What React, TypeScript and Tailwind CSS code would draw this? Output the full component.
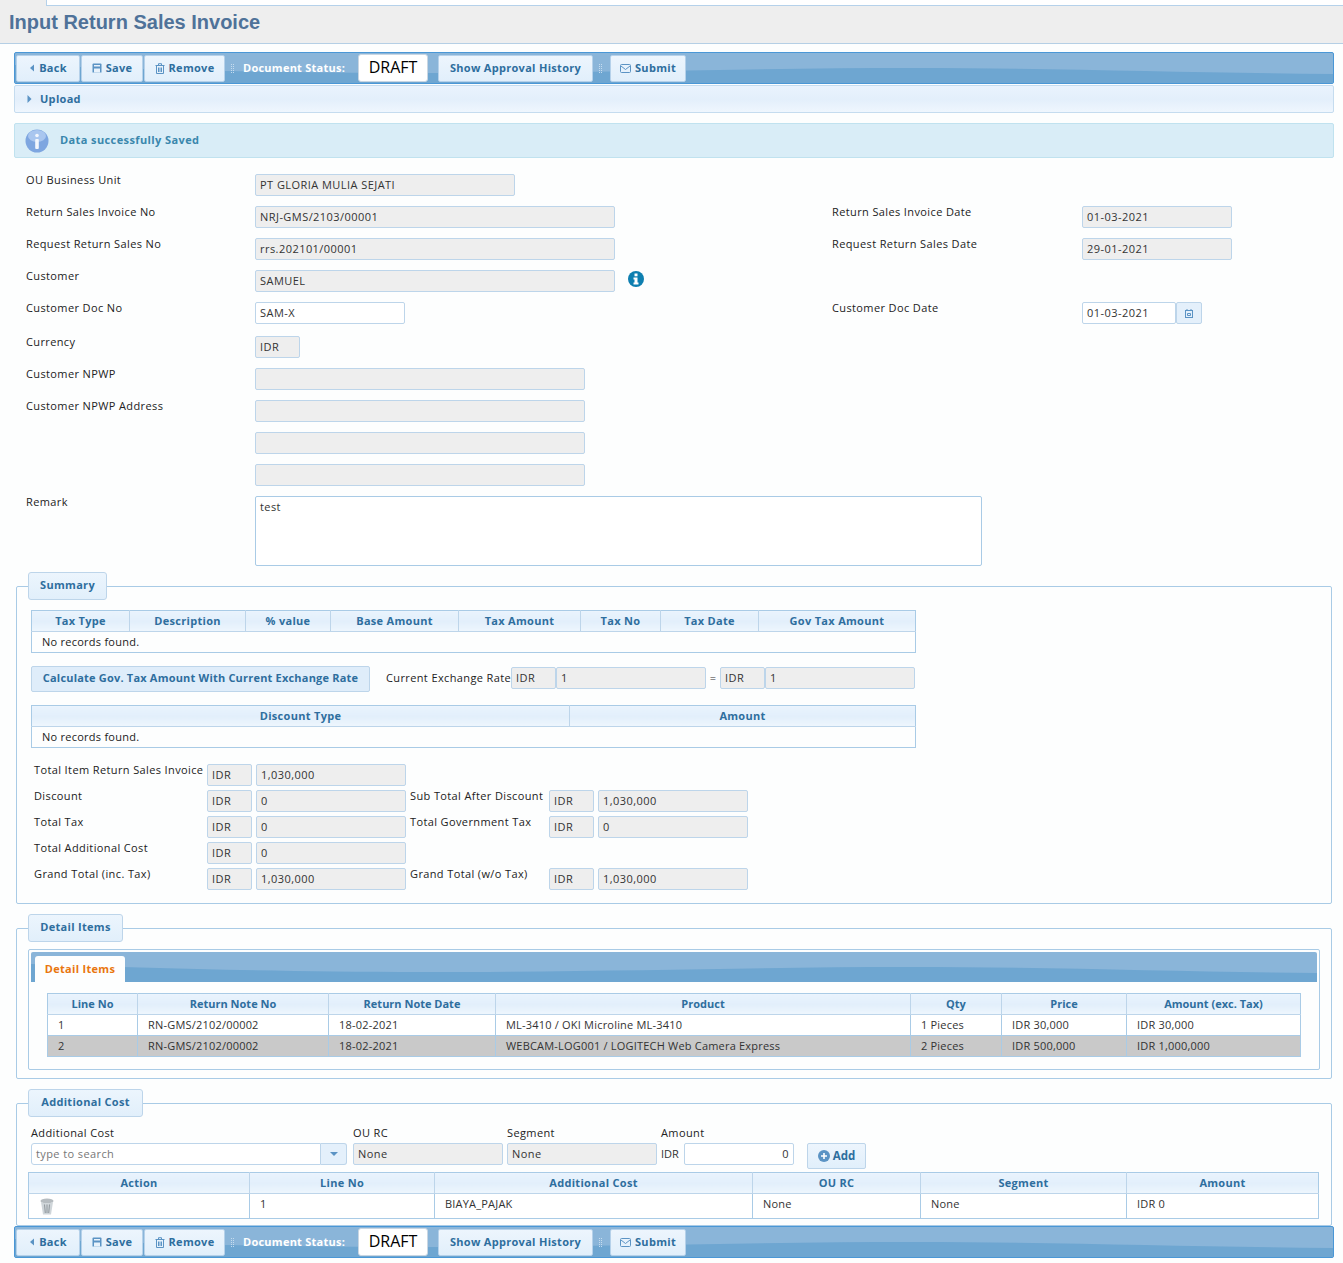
import React from "react";

const Wave = () => (
  <svg className="absolute inset-0 h-full w-full" viewBox="0 0 1320 30" preserveAspectRatio="none">
    <path d="M0 12 C120 16 250 20 400 20 C600 20 750 15 900 15 C1050 15 1180 20 1320 21 L1320 30 L0 30 Z" fill="#6ea6d1" />
  </svg>
);

const TriLeft = () => (
  <svg width="6" height="8" viewBox="0 0 6 8"><path d="M5 0.5V7.5L1 4Z" fill="#5b93c4" /></svg>
);

const SaveIcon = () => (
  <svg width="10" height="10" viewBox="0 0 10 10">
    <path d="M0.5 1.5Q0.5 0.5 1.5 0.5H8.5Q9.5 0.5 9.5 1.5V9.5H0.5Z" fill="#5b93c4" />
    <rect x="2" y="2" width="6" height="1.5" fill="#e8f2fb" />
    <rect x="2" y="5.5" width="6" height="4" fill="#e8f2fb" />
  </svg>
);

const TrashIcon = () => (
  <svg width="10" height="11" viewBox="0 0 10 11" fill="none" stroke="#5b93c4" strokeWidth="1">
    <path d="M0.5 2.5H9.5M3.5 2V0.7H6.5V2M1.5 3V10.5H8.5V3M3.5 4.5V9M5 4.5V9M6.5 4.5V9" />
  </svg>
);

const MailIcon = () => (
  <svg width="11" height="9" viewBox="0 0 11 9" fill="none" stroke="#5b93c4" strokeWidth="1">
    <rect x="0.5" y="0.5" width="10" height="8" rx="1" />
    <path d="M1 2L5.5 5.5L10 2" />
  </svg>
);

const Grip = () => (
  <span className="mx-[6px] grid grid-cols-2 gap-[1px]">
    {Array.from({ length: 10 }).map((_, i) => (
      <span key={i} className="h-[1px] w-[1px] bg-[#c5dcef]" />
    ))}
  </span>
);

const ToolButton = ({ icon, label, className }: { icon?: React.ReactNode; label: string; className: string }) => (
  <button className={`flex h-[27px] items-center justify-center gap-[4px] whitespace-nowrap rounded-[2px] border border-[#b5d1ea] bg-gradient-to-b from-[#edf5fd] to-[#e1effb] text-[11px] font-bold tracking-[0.3px] text-[#2e6e9e] ${className}`}>
    {icon}
    {label}
  </button>
);

const Toolbar = () => (
  <div className="relative ml-[14px] h-[32px] w-[1320px] rounded-[2px] border border-[#4a97d6] bg-[#8ab5d9]">
    <Wave />
    <div className="relative flex h-full items-center pl-[1px]">
      <ToolButton icon={<TriLeft />} label="Back" className="w-[64px]" />
      <ToolButton icon={<SaveIcon />} label="Save" className="ml-[1px] w-[62px]" />
      <ToolButton icon={<TrashIcon />} label="Remove" className="ml-[1px] w-[81px]" />
      <Grip />
      <span className="ml-[3px] w-[115px] whitespace-nowrap text-[11px] font-bold tracking-[0.25px] text-white">Document Status:</span>
      <span className="-mt-[1px] flex h-[28px] w-[70px] items-center justify-center rounded-[3px] border border-[#c9d6e2] bg-white pb-[1px] text-[16px] text-black">DRAFT</span>
      <ToolButton label="Show Approval History" className="ml-[10px] w-[155px]" />
      <Grip />
      <ToolButton icon={<MailIcon />} label="Submit" className="ml-[2px] w-[76px]" />
    </div>
  </div>
);

const inputBase = "flex h-[22px] items-center overflow-hidden whitespace-nowrap rounded-[2px] border border-[#bdd5ea] px-[4px] pb-[2px] text-[11px] leading-none tracking-[0.45px] text-[#333]";

const Box = ({ w, value = "", editable, right }: { w: string; value?: string; editable?: boolean; right?: boolean }) => (
  <div className={`${inputBase} ${w} ${editable ? "bg-white" : "bg-[#eeeeee]"} ${right ? "justify-end" : ""}`}>{value}</div>
);

const Label = ({ children, className = "" }: { children: React.ReactNode; className?: string }) => (
  <div className={`whitespace-nowrap text-[11px] leading-[11px] tracking-[0.38px] text-[#222] ${className}`}>{children}</div>
);

const FormRow = ({ label, children, className = "mb-[10px]" }: { label?: string; children: React.ReactNode; className?: string }) => (
  <div className={`flex h-[22px] ${className}`}>
    <Label className="w-[229px]">{label}</Label>
    {children}
  </div>
);

const Right = ({ label, children }: { label: string; children: React.ReactNode }) => (
  <>
    <Label className="ml-auto w-[250px]">{label}</Label>
    {children}
  </>
);

const Legend = ({ title, w }: { title: string; w: string }) => (
  <legend className={`ml-[11px] flex h-[28px] items-center justify-center rounded-[3px] border border-[#bdd5ea] bg-gradient-to-b from-[#ecf5fd] to-[#e1effb] pb-[2px] text-[11px] font-bold tracking-[0.3px] text-[#2e6e9e] ${w}`}>
    {title}
  </legend>
);

const GridTable = ({ cols, heads, className, children, tight }: { cols: number[]; heads: string[]; className: string; children: React.ReactNode; tight?: boolean }) => (
  <table className={`table-fixed border-collapse border border-[#a9cbe6] ${className}`}>
    <colgroup>
      {cols.map((c, i) => (
        <col key={i} style={{ width: c }} />
      ))}
    </colgroup>
    <thead>
      <tr>
        {heads.map((h) => (
          <th
            key={h}
            className={`h-[21px] border-r border-b border-[#bdd5ea] bg-gradient-to-b from-[#e9f3fd] via-[#e2effb] to-[#eef6fd] p-0 text-center text-[11px] font-bold text-[#2e6e9e] last:border-r-0 ${tight ? "tracking-normal" : "tracking-[0.3px]"}`}
          >
            {h}
          </th>
        ))}
      </tr>
    </thead>
    <tbody>{children}</tbody>
  </table>
);

const Cell = ({ children, tall }: { children?: React.ReactNode; tall?: boolean }) => (
  <td className={`${tall ? "h-[25px] pb-[3px]" : "h-[21px]"} border-r border-b border-[#a9cbe6] pl-[10px] text-[11px] tracking-[0.2px] text-[#333] last:border-r-0`}>
    {children}
  </td>
);

const NoRecords = ({ span }: { span: number }) => (
  <tr>
    <td colSpan={span} className="h-[21px] p-0 pl-[10px] text-[11px] tracking-[0.25px] text-[#222]">No records found.</td>
  </tr>
);

const Total = ({ label, value, label2, value2 }: { label: string; value: string; label2?: string; value2?: string }) => (
  <div className="mb-[4px] flex h-[22px]">
    <Label className="w-[173px]">{label}</Label>
    <Box w="w-[45px]" value="IDR" />
    <div className="ml-[4px]"><Box w="w-[150px]" value={value} /></div>
    {label2 && (
      <>
        <Label className="ml-[4px] w-[139px]">{label2}</Label>
        <Box w="w-[45px]" value="IDR" />
        <div className="ml-[4px]"><Box w="w-[150px]" value={value2} /></div>
      </>
    )}
  </div>
);

const detailRows = [
  ["1", "RN-GMS/2102/00002", "18-02-2021", "ML-3410 / OKI Microline ML-3410", "1 Pieces", "IDR 30,000", "IDR 30,000"],
  ["2", "RN-GMS/2102/00002", "18-02-2021", "WEBCAM-LOG001 / LOGITECH Web Camera Express", "2 Pieces", "IDR 500,000", "IDR 1,000,000"],
];

export default function App() {
  return (
    <div className="min-h-[1263px] bg-[#fdfefe] font-['Open_Sans',sans-serif]">
      <div className="h-[44px] border-b border-[#b5cfe5] bg-[#eeeeee]">
        <div className="ml-[46px] h-[6px] border-b border-l border-[#b5d1ea] bg-white" />
        <h1 className="pl-[9px] pt-[4px] font-['Liberation_Sans',sans-serif] text-[20px] leading-[24px] font-bold text-[#4f7299]">Input Return Sales Invoice</h1>
      </div>

      <div className="h-[8px]" />
      <Toolbar />

      <div className="ml-[14px] mt-[1px] flex h-[28px] w-[1320px] items-center gap-[8px] rounded-[2px] border border-[#c5dcef] bg-gradient-to-b from-[#eaf3fd] via-[#e3effb] to-[#eff6fe] pl-[12px] text-[11px] font-bold tracking-[0.3px] text-[#2e6e9e]">
        <svg width="5" height="8" viewBox="0 0 5 8"><path d="M0.5 0V8L4.5 4Z" fill="#5b93c4" /></svg>
        Upload
      </div>

      <div className="ml-[14px] mt-[10px] flex h-[35px] w-[1320px] items-center rounded-[2px] border border-[#c0e2ef] bg-[#d9edf7] pl-[10px] text-[11px] font-bold tracking-[0.4px] text-[#3a87ad]">
        <svg width="24" height="24" viewBox="0 0 24 24" className="mr-[11px]">
          <circle cx="12" cy="12" r="11.5" fill="#7ea6e0" />
          <ellipse cx="12" cy="7" rx="9" ry="6" fill="#a9c6ef" />
          <circle cx="12" cy="6.5" r="1.8" fill="#f2f6fd" />
          <rect x="10.2" y="10" width="3.6" height="10" rx="1" fill="#f2f6fd" />
        </svg>
        Data successfully Saved
      </div>

      <div className="mx-[26px] mt-[16px] w-[1206px]">
        <FormRow label="OU Business Unit"><Box w="w-[260px]" value="PT GLORIA MULIA SEJATI" /></FormRow>
        <FormRow label="Return Sales Invoice No">
          <Box w="w-[360px]" value="NRJ-GMS/2103/00001" />
          <Right label="Return Sales Invoice Date"><Box w="w-[150px]" value="01-03-2021" /></Right>
        </FormRow>
        <FormRow label="Request Return Sales No">
          <Box w="w-[360px]" value="rrs.202101/00001" />
          <Right label="Request Return Sales Date"><Box w="w-[150px]" value="29-01-2021" /></Right>
        </FormRow>
        <FormRow label="Customer">
          <Box w="w-[360px]" value="SAMUEL" />
          <svg width="16" height="16" viewBox="0 0 16 16" className="ml-[13px] mt-[1px]">
            <circle cx="8" cy="8" r="8" fill="#0e7fb0" />
            <rect x="6.5" y="2.5" width="3" height="2.8" fill="#fff" />
            <path d="M5.5 6.5H9.5V11.5H10.5V13.5H5.5V11.5H6.5V8.5H5.5Z" fill="#fff" />
          </svg>
        </FormRow>
        <FormRow label="Customer Doc No" className="mb-[12px]">
          <Box w="w-[150px]" value="SAM-X" editable />
          <div className="ml-[427px] w-[250px]"><Label>Customer Doc Date</Label></div>
          <Box w="w-[94px]" value="01-03-2021" editable />
          <div className="flex h-[22px] w-[26px] items-center justify-center rounded-[2px] border border-[#bdd5ea] bg-[#e4f0fb]">
            <svg width="8" height="9" viewBox="0 0 8 9" fill="none" stroke="#5b93c4">
              <rect x="0.5" y="1.5" width="7" height="7" />
              <path d="M2 0V2M6 0V2M2.5 4.5H5.5V6.5H2.5Z" />
            </svg>
          </div>
        </FormRow>
        <FormRow label="Currency"><Box w="w-[45px]" value="IDR" /></FormRow>
        <FormRow label="Customer NPWP"><Box w="w-[330px]" /></FormRow>
        <FormRow label="Customer NPWP Address"><Box w="w-[330px]" /></FormRow>
        <FormRow><Box w="w-[330px]" /></FormRow>
        <FormRow><Box w="w-[330px]" /></FormRow>
        <div className="flex h-[70px]">
          <Label className="w-[229px]">Remark</Label>
          <div className="h-[70px] w-[727px] rounded-[2px] border border-[#a9cbe6] bg-white px-[4px] pt-[3px] text-[11px] leading-[13px] tracking-[0.4px] text-[#333]">test</div>
        </div>
      </div>

      <fieldset className="ml-[16px] mt-[6px] h-[332px] w-[1316px] rounded-[2px] border border-[#a9cbe6]">
        <Legend title="Summary" w="w-[79px]" />
        <div className="px-[14px] pt-[10px]">
          <GridTable
            className="w-[884px]"
            cols={[98, 116, 85, 128, 122, 80, 98, 157]}
            heads={["Tax Type", "Description", "% value", "Base Amount", "Tax Amount", "Tax No", "Tax Date", "Gov Tax Amount"]}
          >
            <NoRecords span={8} />
          </GridTable>
          <div className="mt-[13px] flex h-[26px] items-start">
            <button className="flex h-[26px] w-[339px] items-center justify-center whitespace-nowrap rounded-[2px] border border-[#bdd5ea] bg-[#dfedfa] pb-[2px] text-[11px] font-bold tracking-[0.2px] text-[#2e6e9e]">
              Calculate Gov. Tax Amount With Current Exchange Rate
            </button>
            <div className="mt-[1px] flex items-center">
              <Label className="ml-[16px] w-[125px] pb-[2px]">Current Exchange Rate</Label>
              <Box w="w-[45px]" value="IDR" />
              <Box w="w-[150px]" value="1" />
              <span className="w-[14px] text-center text-[11px] text-[#333]">=</span>
              <Box w="w-[45px]" value="IDR" />
              <Box w="w-[150px]" value="1" />
            </div>
          </div>
          <GridTable className="mt-[13px] w-[884px]" cols={[538, 346]} heads={["Discount Type", "Amount"]}>
            <NoRecords span={2} />
          </GridTable>
          <div className="mt-[16px] pl-[3px]">
            <Total label="Total Item Return Sales Invoice" value="1,030,000" />
            <Total label="Discount" value="0" label2="Sub Total After Discount" value2="1,030,000" />
            <Total label="Total Tax" value="0" label2="Total Government Tax" value2="0" />
            <Total label="Total Additional Cost" value="0" />
            <Total label="Grand Total (inc. Tax)" value="1,030,000" label2="Grand Total (w/o Tax)" value2="1,030,000" />
          </div>
        </div>
      </fieldset>

      <fieldset className="ml-[16px] mt-[10px] h-[165px] w-[1316px] rounded-[2px] border border-[#a9cbe6]">
        <Legend title="Detail Items" w="w-[95px]" />
        <div className="mx-[11px] mt-[7px] h-[121px] w-[1292px] rounded-[2px] border border-[#a9cbe6] p-[2px]">
          <div className="relative h-[30px] rounded-t-[2px] bg-[#8ab5d9]">
            <Wave />
            <div className="absolute bottom-0 left-[4px] flex h-[26px] w-[90px] items-center justify-center rounded-t-[3px] bg-[#fdfefe] text-[11px] font-bold tracking-[0.3px] text-[#e9760f]">
              Detail Items
            </div>
          </div>
          <div className="px-[16px] pt-[11px]">
            <GridTable
              tight
              className="w-[1253px]"
              cols={[90, 191, 167, 415, 91, 125, 174]}
              heads={["Line No", "Return Note No", "Return Note Date", "Product", "Qty", "Price", "Amount (exc. Tax)"]}
            >
              {detailRows.map((r, i) => (
                <tr key={i} className={i === 1 ? "bg-[#c9c9c9]" : "bg-white"}>
                  {r.map((c) => (
                    <Cell key={c}>{c}</Cell>
                  ))}
                </tr>
              ))}
            </GridTable>
          </div>
        </div>
      </fieldset>

      <fieldset className="ml-[16px] mt-[10px] h-[137px] w-[1316px] rounded-[2px] border border-[#a9cbe6]">
        <Legend title="Additional Cost" w="w-[115px]" />
        <div className="pl-[14px] pt-[9px]">
          <div className="flex">
            <div className="w-[322px]">
              <Label className="mt-[1px] mb-[5px]">Additional Cost</Label>
              <div className="flex h-[22px] w-[316px]">
                <div className="flex w-[290px] items-center rounded-l-[3px] border border-[#bdd5ea] bg-white px-[4px] text-[11px] tracking-[0.4px] text-[#777]">type to search</div>
                <div className="flex w-[26px] items-center justify-center rounded-r-[3px] border border-l-0 border-[#bdd5ea] bg-[#e4f0fb]">
                  <svg width="8" height="4" viewBox="0 0 8 4"><path d="M0 0H8L4 4Z" fill="#5b93c4" /></svg>
                </div>
              </div>
            </div>
            <div className="w-[154px]">
              <Label className="mt-[1px] mb-[5px]">OU RC</Label>
              <Box w="w-[150px]" value="None" />
            </div>
            <div className="w-[154px]">
              <Label className="mt-[1px] mb-[5px]">Segment</Label>
              <Box w="w-[150px]" value="None" />
            </div>
            <div>
              <Label className="mt-[1px] mb-[5px]">Amount</Label>
              <div className="flex">
                <span className="w-[23px] text-[11px] leading-[22px] text-[#333]">IDR</span>
                <Box w="w-[110px]" value="0" editable right />
                <button className="ml-[13px] flex h-[26px] w-[59px] items-center justify-center gap-[3px] rounded-[2px] border border-[#bdd5ea] bg-gradient-to-b from-[#edf5fd] to-[#e1effb] text-[11.5px] font-bold text-[#2e6e9e]">
                  <svg width="12" height="12" viewBox="0 0 12 12">
                    <circle cx="6" cy="6" r="6" fill="#5b93c4" />
                    <path d="M6 3V9M3 6H9" stroke="#fff" strokeWidth="1.6" />
                  </svg>
                  Add
                </button>
              </div>
            </div>
          </div>
          <div className="-ml-[3px] mt-[3px]">
            <GridTable
              className="w-[1290px]"
              cols={[221, 185, 318, 168, 206, 192]}
              heads={["Action", "Line No", "Additional Cost", "OU RC", "Segment", "Amount"]}
            >
              <tr className="bg-white">
                <td className="h-[25px] border-r border-b border-[#a9cbe6] pl-[11px]">
                  <svg width="14" height="17" viewBox="0 0 14 17" className="mt-[1px]">
                    <ellipse cx="7" cy="3" rx="6.5" ry="2.5" fill="#b6bcc0" />
                    <path d="M1 4L3 16.5H11L13 4Q7 6.5 1 4Z" fill="#cfd5d9" />
                    <path d="M4.5 6.5L5.3 15M7 6.5V15M9.5 6.5L8.7 15" stroke="#8f979c" strokeWidth="1" />
                  </svg>
                </td>
                <Cell tall>1</Cell>
                <Cell tall>BIAYA_PAJAK</Cell>
                <Cell tall>None</Cell>
                <Cell tall>None</Cell>
                <Cell tall>IDR 0</Cell>
              </tr>
            </GridTable>
          </div>
        </div>
      </fieldset>

      <Toolbar />
    </div>
  );
}
